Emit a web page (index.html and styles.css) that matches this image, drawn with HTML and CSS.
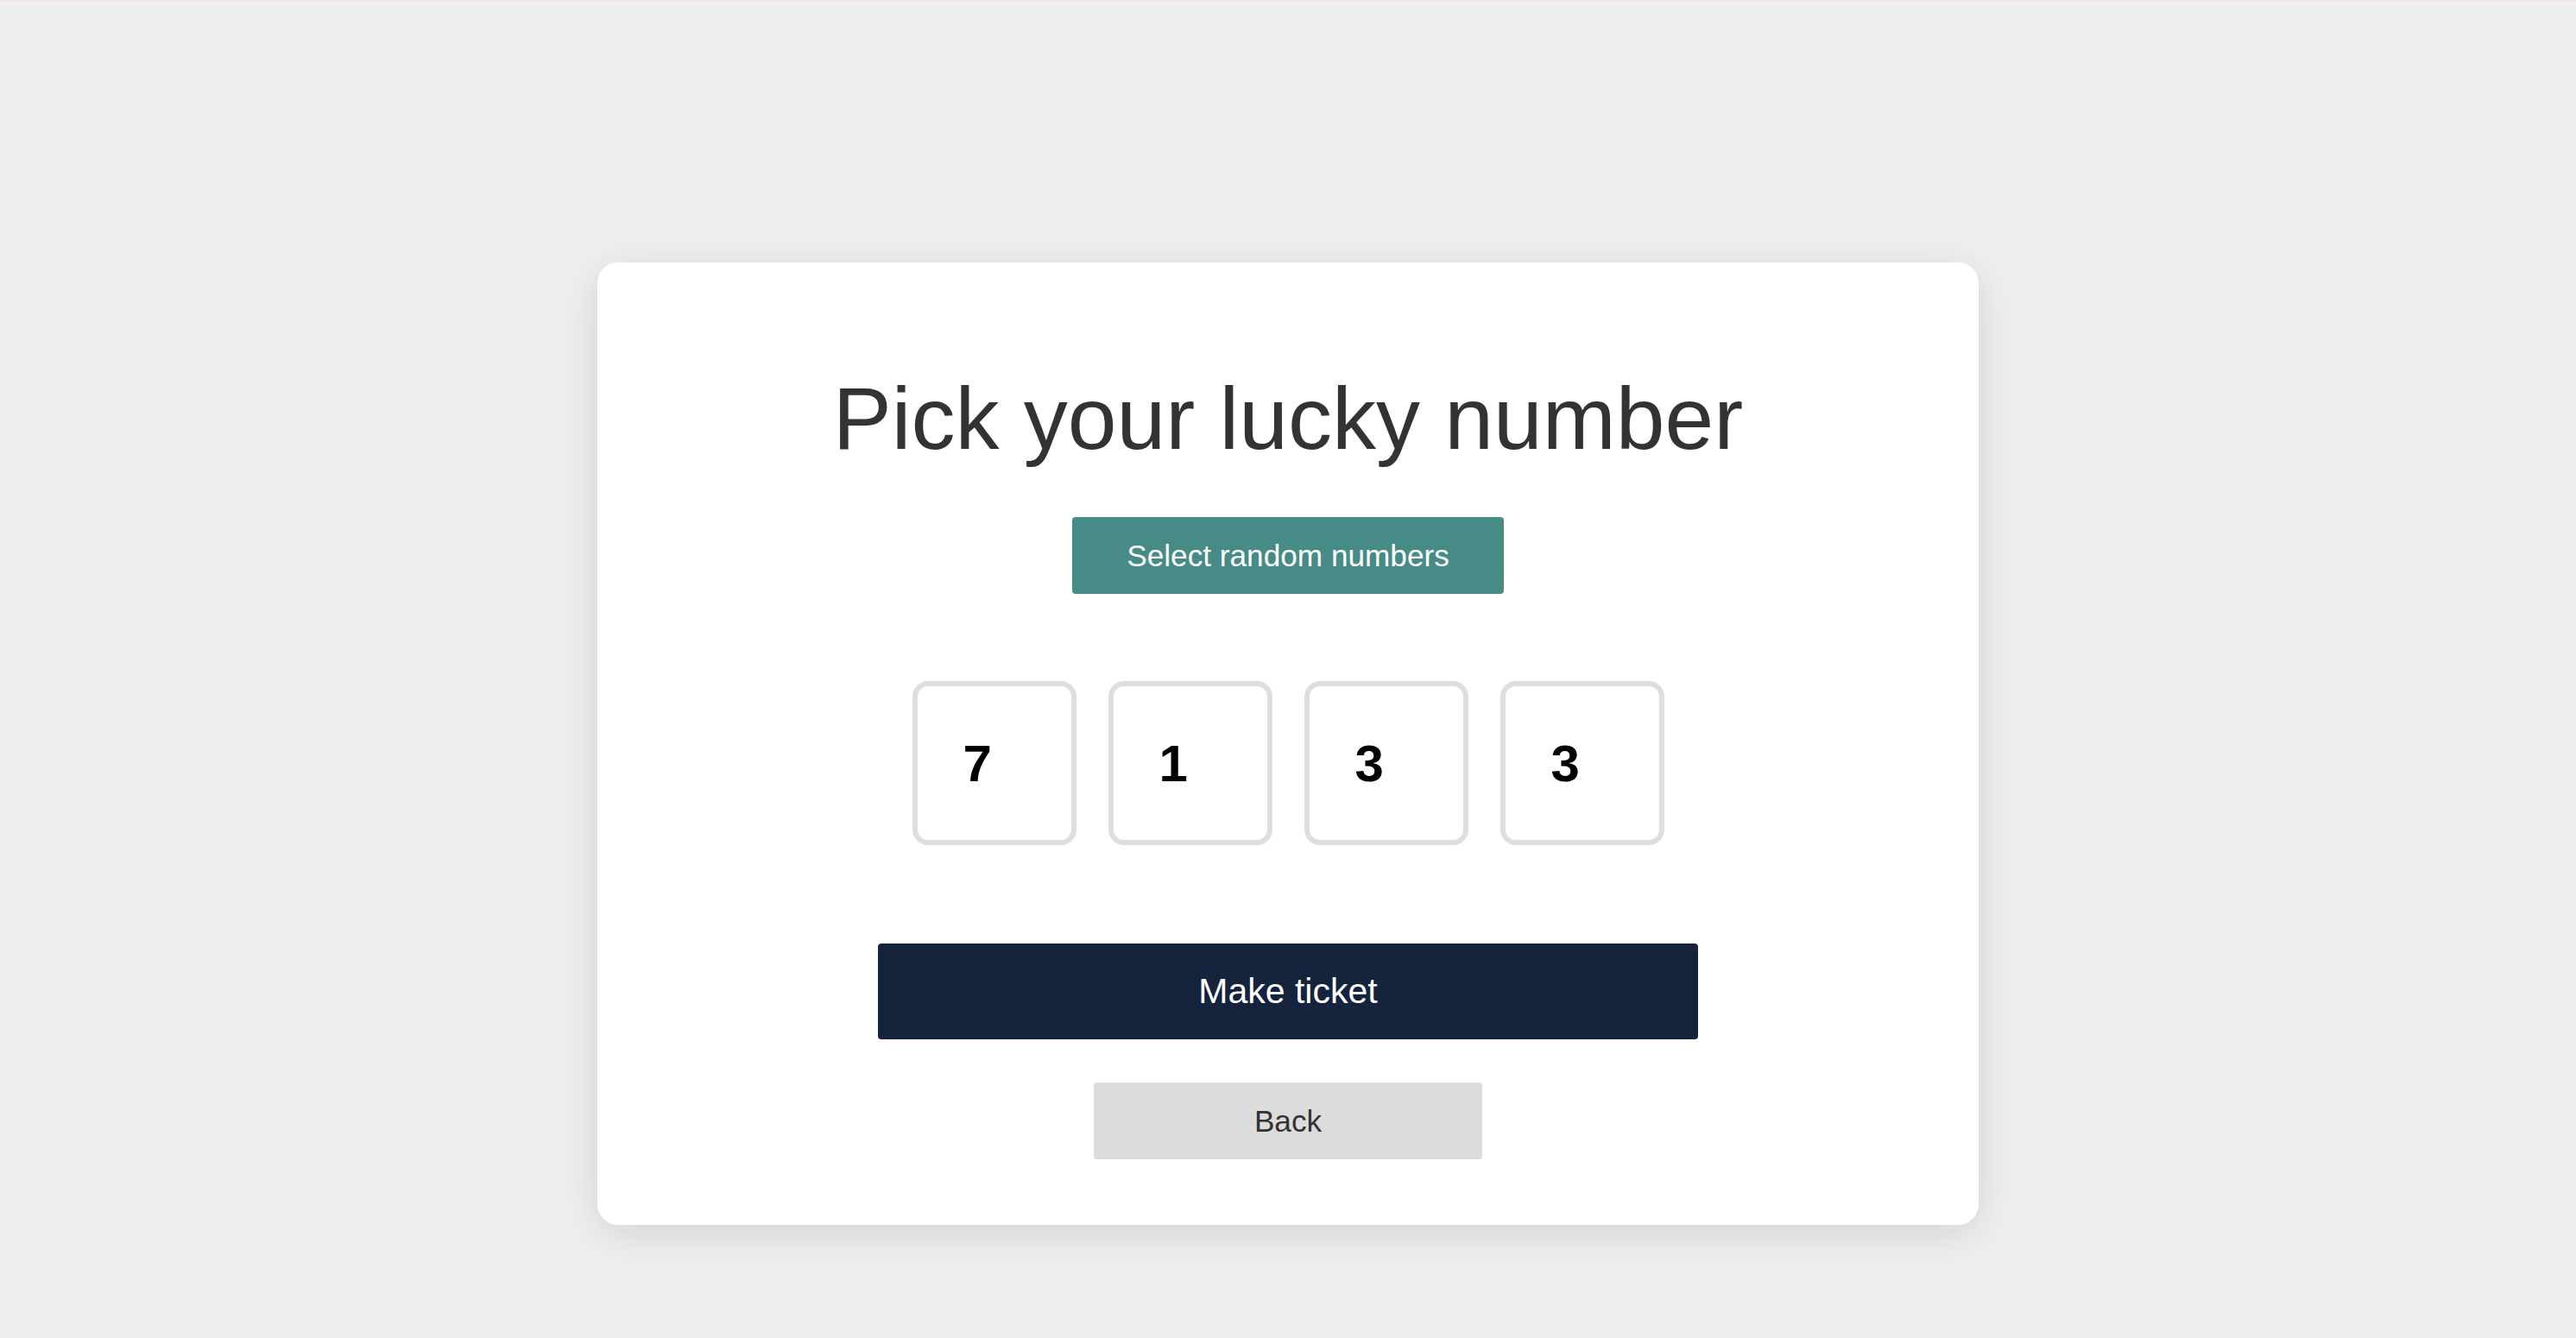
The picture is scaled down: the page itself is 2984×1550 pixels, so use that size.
FILE: index.html
```html
<!DOCTYPE html>
<html lang="en">
<head>
    <meta charset="UTF-8">
    <meta name="viewport" content="width=device-width, initial-scale=1.0">
    <title>Pick your lucky number</title>
    <link rel="stylesheet" href="styles.css">
</head>
<body>
    <div class="page">
        <div class="card">
            <h1>Pick your lucky number</h1>

            <button class="btn-random">Select random numbers</button>

            <div class="numbers">
                <div class="number-box">7</div>
                <div class="number-box">1</div>
                <div class="number-box">3</div>
                <div class="number-box">3</div>
            </div>

            <button class="btn-ticket">Make ticket</button>
            <button class="btn-back">Back</button>
        </div>
    </div>
</body>
</html>
```

FILE: styles.css
```css
html, body {
    margin: 0;
    padding: 0;
}
body {
    font-family: "Liberation Sans", Arial, sans-serif;
    background-color: #efefef;
    border-top: 2px solid #f5e2e2;
    min-height: 100vh;
    box-sizing: border-box;
}
.page {
    display: flex;
    justify-content: center;
    padding-top: 302px;
}
.card {
    width: 1600px;
    box-sizing: border-box;
    background: white;
    border-radius: 24px;
    box-shadow: 0 10px 50px rgba(0,0,0,0.12);
    padding: 74px 0 76px;
    display: flex;
    flex-direction: column;
    align-items: center;
}
h1 {
    color: #333;
    font-size: 102px;
    font-weight: normal;
    line-height: normal;
    margin: 49px 0 55px;
}
button {
    font-family: "Liberation Sans", Arial, sans-serif;
    border: none;
    border-radius: 4px;
    cursor: pointer;
    padding: 0;
}
.btn-random {
    background-color: #468b85;
    color: white;
    font-size: 35.2px;
    width: 500px;
    height: 89px;
}
.numbers {
    display: flex;
    gap: 37px;
    margin-top: 101px;
}
.number-box {
    width: 190px;
    height: 190px;
    box-sizing: border-box;
    border: 6px solid #dedede;
    border-radius: 18px;
    display: flex;
    align-items: center;
    padding-left: 53px;
    font-size: 60px;
    font-weight: bold;
    color: #000;
}
.btn-ticket {
    background-color: #15243c;
    color: white;
    font-size: 41px;
    width: 950px;
    height: 111px;
    margin-top: 114px;
}
.btn-back {
    background-color: #dcdcdc;
    color: #333;
    font-size: 35.2px;
    width: 450px;
    height: 89px;
    margin-top: 50px;
}
```
